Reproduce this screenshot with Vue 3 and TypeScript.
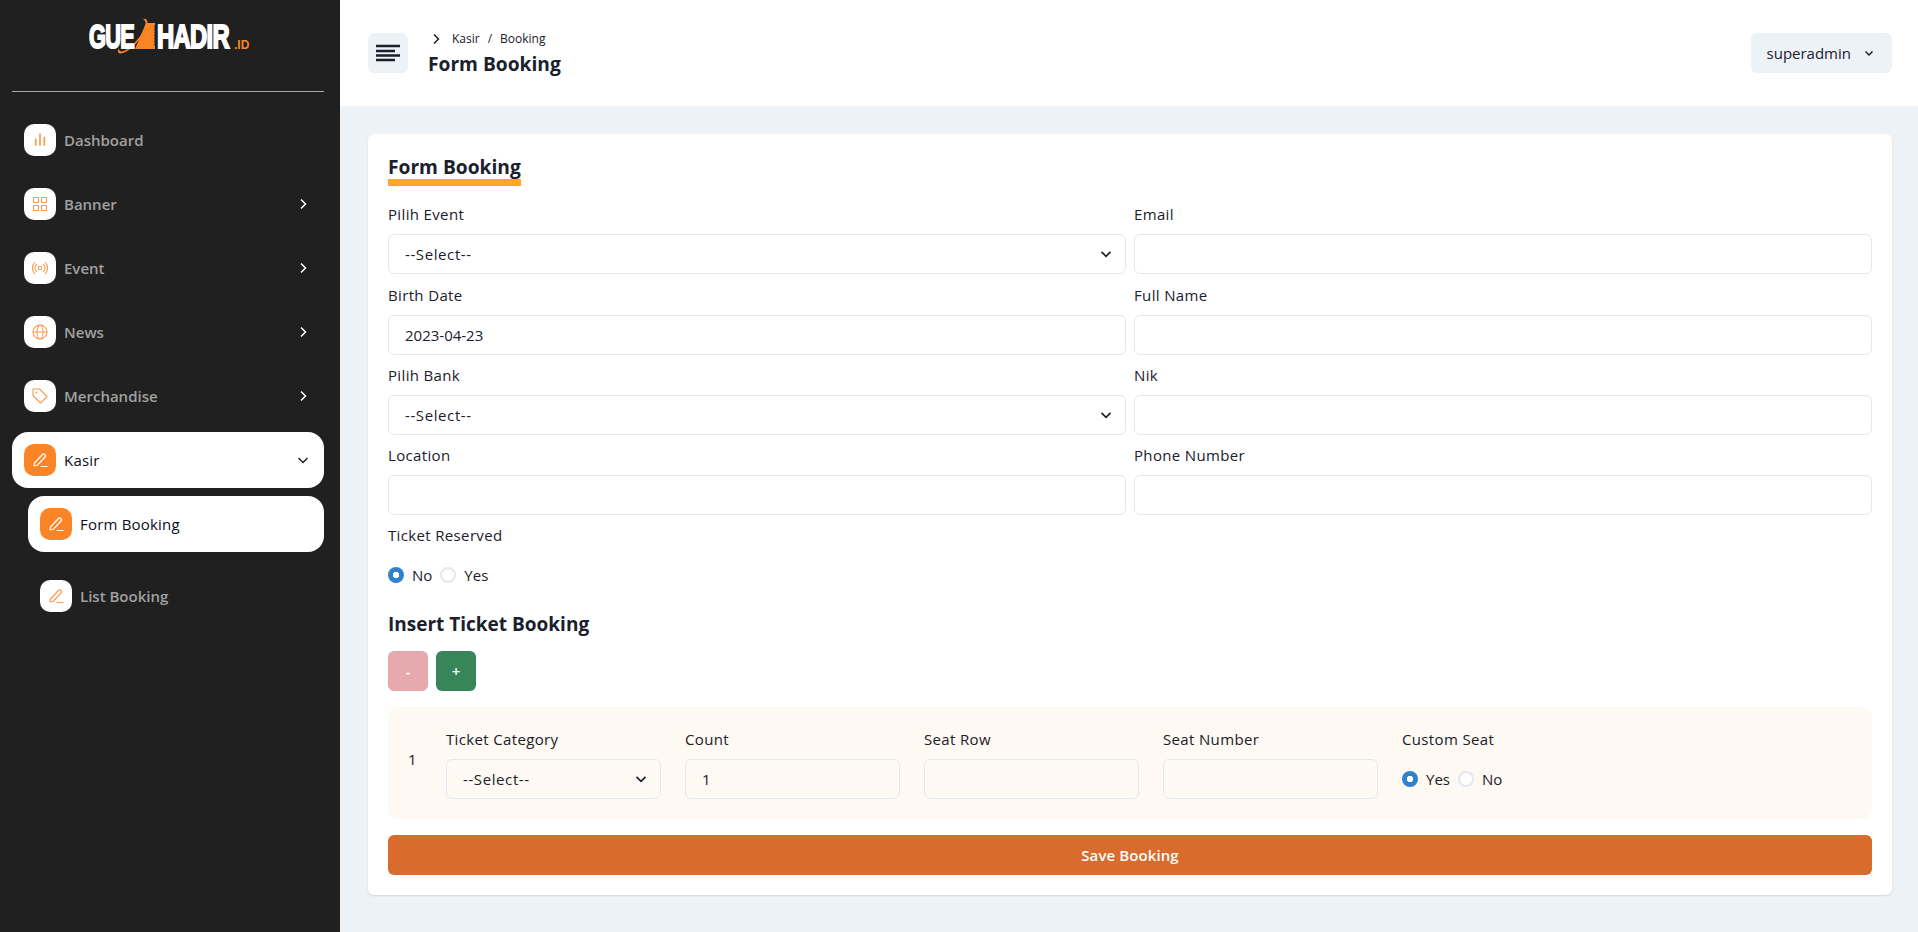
<template>
  <div class="layout">
    <aside class="sidebar">
      <div class="logo">
        <span class="logo-word gue">GUE</span>
        <svg class="logo-ticket" width="40" height="38" viewBox="0 0 40 38">
          <path d="M29 5h9v2l-1 1.500 1 1.500-1 1.500 1 1.500-1 1.500 1 1.500-1 1.500 1 1.500-1 1.500 1 1.500-1 1.500 1 1.500-1 1.500 1 1.500V31H18z" fill="#f98425" />
          <path d="M26 1c5-1 6 4 2 12C22 24 11 35 4 35.500c-3 0-4-2-2-5 0 2 1 3 3 3 6-1 16-11 21-20 3-6 4-10 0-12.500z" fill="#f98425" />
        </svg>
        <span class="logo-word hadir">HADIR</span>
        <span class="logo-id">.ID</span>
      </div>
      <hr class="divider" />

      <nav class="menu">
        <a v-for="item in menu" :key="item.label" class="menu-item" :class="{ active: item.active, sub: item.sub }">
          <span class="icon-box">
            <svg width="16" height="16" viewBox="0 0 16 16" fill="none" stroke="currentColor" stroke-width="1.100" stroke-linecap="round" stroke-linejoin="round">
              <g v-if="item.icon === 'chart'">
                <path d="M3.700 6.500v7.200M8 1.500v12.200M12.300 4.700v9" stroke-width="1.700" stroke-linecap="butt" />
              </g>
              <g v-else-if="item.icon === 'grid'">
                <rect x="1.500" y="1.500" width="5" height="5" />
                <rect x="9.500" y="1.500" width="5" height="5" />
                <rect x="1.500" y="9.500" width="5" height="5" />
                <rect x="9.500" y="9.500" width="5" height="5" />
              </g>
              <g v-else-if="item.icon === 'radio'">
                <circle cx="8" cy="8" r="1.800" />
                <path d="M4.600 4.300a5 5 0 0 0 0 7.400M11.400 4.300a5 5 0 0 1 0 7.400M2.600 2.600a8 8 0 0 0 0 10.800M13.400 2.600a8 8 0 0 1 0 10.800" />
              </g>
              <g v-else-if="item.icon === 'globe'">
                <circle cx="8" cy="8" r="7" />
                <ellipse cx="8" cy="8" rx="3" ry="7" />
                <path d="M1 8h14" />
              </g>
              <g v-else-if="item.icon === 'tag'">
                <path d="M1 1h6.500l7.500 7.500-6.500 6.500L1 7.500z" />
                <circle cx="4.500" cy="4.500" r=".4" />
              </g>
              <g v-else>
                <path d="M2.500 11l8-8.500a1.500 1.500 0 0 1 2.500 2.500L5 13.500l-3 .5z" stroke-width="1.200" />
                <path d="M9 14.500h6" stroke-width="1.200" />
              </g>
            </svg>
          </span>
          <span class="menu-label">{{ item.label }}</span>
          <svg v-if="item.arrow === 'right'" class="arrow" width="16" height="16" viewBox="0 0 16 16" fill="none" stroke="#fff" stroke-width="1.500">
            <path d="M6 3.500 10.500 8 6 12.500" />
          </svg>
          <svg v-if="item.arrow === 'down'" class="arrow" width="16" height="16" viewBox="0 0 16 16" fill="none" stroke="#1a202c" stroke-width="1.500">
            <path d="M3.500 6 8 10.500 12.500 6" />
          </svg>
        </a>
      </nav>
    </aside>

    <div class="main">
      <header class="topbar">
        <button class="menu-btn" type="button">
          <svg width="24" height="24" viewBox="0 0 24 24" stroke="#1a202c" stroke-width="2.400">
            <path d="M0 5h24M0 10h19M0 14.500h24M0 19h19" />
          </svg>
        </button>
        <div class="page-head">
          <div class="crumbs">
            <svg width="16" height="16" viewBox="0 0 16 16" fill="none" stroke="#1a202c" stroke-width="1.500">
              <path d="M6 3.500 10.500 8 6 12.500" />
            </svg>
            <span class="crumb-text">Kasir</span>
            <span class="crumb-sep">/</span>
            <span class="crumb-text">Booking</span>
          </div>
          <div class="page-title">Form Booking</div>
        </div>
        <button class="user-btn" type="button">
          superadmin
          <svg width="14" height="14" viewBox="0 0 14 14" fill="none" stroke="#1a202c" stroke-width="1.500">
            <path d="M3.500 5.500 7 9l3.500-3.500" />
          </svg>
        </button>
      </header>

      <main class="content">
        <section class="card">
          <h2 class="card-title">Form Booking</h2>

          <div class="form-grid">
            <div class="field">
              <label>Pilih Event</label>
              <div class="select-wrap">
                <select><option>--Select--</option></select>
                <svg class="chevron" width="12" height="12" viewBox="0 0 12 12" fill="none" stroke="#1a202c" stroke-width="1.700"><path d="M1.500 3.800 6 8.300l4.500-4.500" /></svg>
              </div>
            </div>
            <div class="field">
              <label>Email</label>
              <input type="text" />
            </div>
            <div class="field">
              <label>Birth Date</label>
              <input type="text" value="2023-04-23" />
            </div>
            <div class="field">
              <label>Full Name</label>
              <input type="text" />
            </div>
            <div class="field">
              <label>Pilih Bank</label>
              <div class="select-wrap">
                <select><option>--Select--</option></select>
                <svg class="chevron" width="12" height="12" viewBox="0 0 12 12" fill="none" stroke="#1a202c" stroke-width="1.700"><path d="M1.500 3.800 6 8.300l4.500-4.500" /></svg>
              </div>
            </div>
            <div class="field">
              <label>Nik</label>
              <input type="text" />
            </div>
            <div class="field">
              <label>Location</label>
              <input type="text" />
            </div>
            <div class="field">
              <label>Phone Number</label>
              <input type="text" />
            </div>
          </div>

          <div class="reserved">
            <label class="plain-label">Ticket Reserved</label>
            <div class="radios">
              <span class="radio checked"></span><span class="radio-text">No</span>
              <span class="radio"></span><span class="radio-text">Yes</span>
            </div>
          </div>

          <h3 class="sub-title">Insert Ticket Booking</h3>
          <div class="row-actions">
            <button class="btn-minus" type="button">-</button>
            <button class="btn-plus" type="button">+</button>
          </div>

          <div class="ticket-row">
            <span class="ticket-no">1</span>
            <div class="ticket-cols">
              <div class="ticket-field">
                <label>Ticket Category</label>
                <div class="select-wrap">
                  <select><option>--Select--</option></select>
                  <svg class="chevron" width="12" height="12" viewBox="0 0 12 12" fill="none" stroke="#1a202c" stroke-width="1.700"><path d="M1.500 3.800 6 8.300l4.500-4.500" /></svg>
                </div>
              </div>
              <div class="ticket-field">
                <label>Count</label>
                <input type="text" value="1" />
              </div>
              <div class="ticket-field">
                <label>Seat Row</label>
                <input type="text" />
              </div>
              <div class="ticket-field">
                <label>Seat Number</label>
                <input type="text" />
              </div>
              <div class="ticket-field">
                <label>Custom Seat</label>
                <div class="radios inline">
                  <span class="radio checked"></span><span class="radio-text">Yes</span>
                  <span class="radio"></span><span class="radio-text">No</span>
                </div>
              </div>
            </div>
          </div>

          <button class="save-btn" type="button">Save Booking</button>
        </section>
      </main>
    </div>
  </div>
</template>

<script setup lang="ts">
interface MenuItem {
  label: string
  icon: string
  arrow?: 'right' | 'down'
  active?: boolean
  sub?: boolean
}

const menu: MenuItem[] = [
  { label: 'Dashboard', icon: 'chart' },
  { label: 'Banner', icon: 'grid', arrow: 'right' },
  { label: 'Event', icon: 'radio', arrow: 'right' },
  { label: 'News', icon: 'globe', arrow: 'right' },
  { label: 'Merchandise', icon: 'tag', arrow: 'right' },
  { label: 'Kasir', icon: 'pen', arrow: 'down', active: true },
  { label: 'Form Booking', icon: 'pen', active: true, sub: true },
  { label: 'List Booking', icon: 'pen', sub: true },
]
</script>

<style>
html,
body {
  margin: 0;
  background: #edf2f7;
}
</style>

<style scoped>
* {
  box-sizing: border-box;
}

.layout {
  display: flex;
  min-height: 932px;
  font-family: "Open Sans", "Noto Sans", sans-serif;
  color: #1a202c;
}

.sidebar {
  width: 340px;
  flex-shrink: 0;
  background: #202020;
  padding: 0 16px 0 12px;
}

.logo {
  height: 91px;
  padding: 17px 0 0 77px;
  display: flex;
  align-items: flex-start;
  color: #fff;
  font-family: "Liberation Sans", sans-serif;
  font-weight: 700;
}

.logo-word {
  display: block;
  flex-shrink: 0;
  font-size: 34px;
  line-height: 38px;
  font-weight: 700;
  -webkit-text-stroke: 2px #fff;
  transform-origin: left center;
}

.gue {
  width: 44px;
  letter-spacing: -1px;
  transform: scaleX(0.64);
}

.hadir {
  width: 75px;
  letter-spacing: -1px;
  transform: scaleX(0.7);
}

.logo-ticket {
  flex-shrink: 0;
  margin: 1px 0 0 -16px;
}

.logo-id {
  color: #f98425;
  font-size: 12px;
  font-weight: 700;
  margin: 20px 0 0 2px;
  line-height: 16px;
}

.divider {
  margin: 0;
  border: 0;
  border-top: 1px solid #a8a8a8;
}

.menu {
  display: flex;
  flex-direction: column;
  gap: 8px;
  margin-top: 20px;
}

.menu-item {
  height: 56px;
  padding: 0 12px;
  display: flex;
  align-items: center;
  gap: 8px;
  color: #a0a0a0;
  font-size: 15px;
  font-weight: 600;
  border-radius: 16px;
}

.menu-item.active {
  background: #fff;
  color: #0c1020;
  font-weight: 500;
  letter-spacing: 0.2px;
}

.menu-item.sub {
  margin-left: 16px;
}

.menu-item.sub:last-child {
  margin-top: 8px;
}

.icon-box {
  width: 32px;
  height: 32px;
  border-radius: 10px;
  background: #fff;
  color: #fb9a52;
  display: flex;
  align-items: center;
  justify-content: center;
  flex-shrink: 0;
}

.active .icon-box {
  background: #fb8526;
  color: #fff;
}

.menu-label {
  flex: 1;
}

.arrow {
  margin-right: 1px;
}

.main {
  flex: 1;
  min-width: 0;
  display: flex;
  flex-direction: column;
}

.topbar {
  height: 106px;
  background: #fff;
  padding: 0 26px 0 28px;
  display: flex;
  align-items: center;
}

.menu-btn {
  width: 40px;
  height: 40px;
  border: 0;
  border-radius: 6px;
  background: #edf2f7;
  padding: 0;
  display: flex;
  align-items: center;
  justify-content: center;
}

.page-head {
  margin-left: 20px;
  flex: 1;
}

.crumbs {
  display: flex;
  align-items: center;
  height: 20px;
  font-size: 12px;
}

.crumb-text {
  color: #1a202c;
}

.crumbs svg {
  margin-right: 8px;
}

.crumb-sep {
  margin: 0 8px;
}

.page-title {
  margin-top: 1px;
  font-size: 19.200px;
  line-height: 28px;
  font-weight: 700;
}

.user-btn {
  height: 40px;
  border: 0;
  border-radius: 6px;
  background: #edf2f7;
  padding: 0 16px;
  display: flex;
  align-items: center;
  gap: 11px;
  font: 400 15px "Open Sans", sans-serif;
  color: #1a202c;
}

.content {
  flex: 1;
  padding: 28px 26px 38px 28px;
}

.card {
  background: #fff;
  border-radius: 6px;
  padding: 20px;
  box-shadow: 0 1px 2px rgba(0, 0, 0, 0.12);
}

.card-title {
  display: inline-block;
  margin: 0;
  padding-top: 1px;
  font-size: 19.200px;
  line-height: 24px;
  font-weight: 700;
  border-bottom: 7px solid #ffa62b;
  height: 32px;
}

.form-grid {
  display: grid;
  grid-template-columns: 1fr 1fr;
  gap: 0 8px;
  margin-top: 16px;
}

.field {
  height: 80px;
}

.field:nth-child(-n + 2) {
  height: 81px;
}

label {
  display: block;
  font-size: 15px;
  font-weight: 500;
  letter-spacing: 0.35px;
  line-height: 24px;
  margin-bottom: 8px;
  white-space: nowrap;
}

input,
select {
  display: block;
  width: 100%;
  height: 40px;
  border: 1px solid #e2e8f0;
  border-radius: 6px;
  background: transparent;
  padding: 0 16px;
  font: 400 15px "Open Sans", sans-serif;
  color: #1a202c;
  outline: none;
  appearance: none;
}

select {
  letter-spacing: 0.6px;
}

.select-wrap {
  position: relative;
}

.chevron {
  position: absolute;
  right: 14px;
  top: 14px;
  pointer-events: none;
}

.plain-label {
  margin-bottom: 16px;
}

.radios {
  display: flex;
  align-items: center;
  height: 24px;
  font-size: 15px;
}

.radios.inline {
  height: 40px;
}

.radio {
  width: 16px;
  height: 16px;
  border-radius: 50%;
  border: 2px solid #e2e8f0;
  background: #fff;
  flex-shrink: 0;
}

.radio.checked {
  border: 0;
  background: radial-gradient(circle, #fff 0 3px, #3182ce 3.500px);
}

.radio-text {
  margin: 0 8px;
}

.sub-title {
  margin: 23px 0 0;
  font-size: 19px;
  line-height: 28px;
  font-weight: 700;
}

.row-actions {
  display: flex;
  gap: 8px;
  margin-top: 13px;
}

.row-actions button {
  width: 40px;
  height: 40px;
  border: 0;
  border-radius: 6px;
  color: #fff;
  font: 600 15px "Open Sans", sans-serif;
  padding: 0;
}

.btn-minus {
  background: #e6a9ad;
}

.btn-plus {
  background: #38855a;
}

.ticket-row {
  margin-top: 16px;
  height: 112px;
  background: #fef9f2;
  border-radius: 10px;
  padding: 20px;
  display: flex;
  align-items: center;
}

.ticket-no {
  width: 38px;
  flex-shrink: 0;
  margin-bottom: 9px;
  font-size: 15px;
  font-weight: 500;
}

.ticket-cols {
  display: grid;
  grid-template-columns: repeat(5, 215px);
  gap: 24px;
}

.ticket-field label {
  margin-bottom: 8px;
}

.save-btn {
  display: block;
  width: 100%;
  height: 40px;
  margin-top: 16px;
  border: 0;
  border-radius: 6px;
  background: #d96b2c;
  color: #fff;
  font: 600 15px "Open Sans", sans-serif;
  letter-spacing: 0.1px;
}
</style>
